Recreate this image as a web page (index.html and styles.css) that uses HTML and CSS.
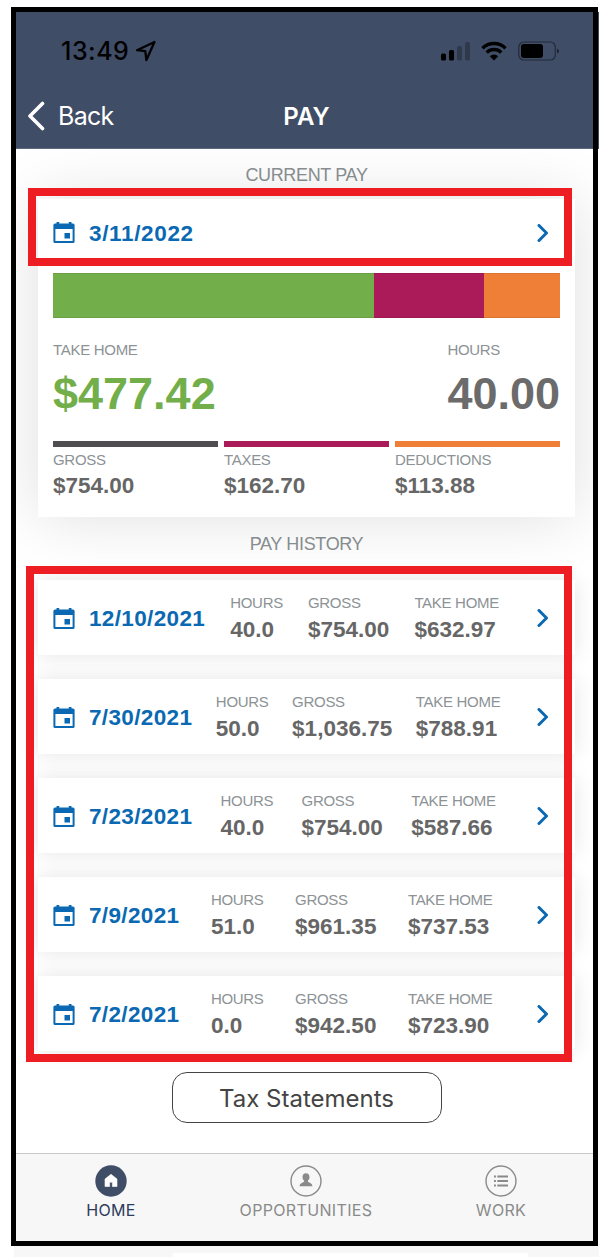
FILE: index.html
```html
<!DOCTYPE html>
<html lang="en">
<head>
    <meta charset="UTF-8">
    <meta name="viewport" content="width=device-width, initial-scale=1.0">
    <title>Pay</title>
    <link rel="stylesheet" href="styles.css">
</head>
<body>
    <!-- Shared icons -->
    <svg class="defs" width="0" height="0">
        <symbol id="calendar" viewBox="0 0 22 22">
            <path fill-rule="evenodd" d="M3.500 0h2.700v1.500h9.600V0h2.700v1.500H20a1.600 1.600 0 0 1 1.600 1.600V19.400a1.600 1.600 0 0 1-1.600 1.600H2A1.600 1.600 0 0 1 .4 19.400V3.100A1.600 1.600 0 0 1 2 1.500h1.500zM2.400 7v12h17.200V7zM11.500 11h5.500v5.500h-5.500z"/>
        </symbol>
        <symbol id="chevron" viewBox="0 0 12 18">
            <path d="M2 1.500 9.500 9 2 16.500" fill="none" stroke="currentColor" stroke-width="3" stroke-linecap="round" stroke-linejoin="round"/>
        </symbol>
    </svg>

    <div class="phone">
        <header class="header">
            <div class="status">
                <span class="time">13:49</span>
                <svg class="location" width="22" height="22" viewBox="0 0 22 22">
                    <path d="M19.500 2 2 10.200l8.300 1 1.100 8.800z" fill="none" stroke="#000" stroke-width="2.300" stroke-linejoin="round"/>
                </svg>
                <div class="status-icons">
                    <svg width="29" height="20" viewBox="0 0 29 20">
                        <rect x="0" y="12.500" width="5" height="7" rx="1.500"/>
                        <rect x="8" y="9" width="5" height="10.500" rx="1.500"/>
                        <rect x="16" y="5" width="5" height="14.500" rx="1.500" opacity=".25"/>
                        <rect x="24" y="1" width="5" height="18.500" rx="1.500" opacity=".25"/>
                    </svg>
                    <svg width="26" height="20" viewBox="0 0 26 20">
                        <path d="M1.500 7.200a16.500 16.500 0 0 1 23 0M5.700 11.500a10.500 10.500 0 0 1 14.600 0" fill="none" stroke="#000" stroke-width="3.400"/>
                        <path d="M13 19.500 8.800 15.300a6 6 0 0 1 8.400 0z"/>
                    </svg>
                    <svg width="42" height="20" viewBox="0 0 42 20">
                        <rect x=".8" y="1" width="36.500" height="18" rx="5" fill="none" stroke="#000" stroke-opacity=".45" stroke-width="1.200"/>
                        <rect x="3" y="3" width="22" height="14" rx="3"/>
                        <path d="M39 7.500q2 .8 2 2.500t-2 2.500z" opacity=".55"/>
                    </svg>
                </div>
            </div>
            <div class="nav">
                <a class="back">
                    <svg width="18" height="30" viewBox="0 0 18 30">
                        <path d="M15.500 2.500 3 15l12.500 12.500" fill="none" stroke="#fff" stroke-width="3.600" stroke-linecap="round" stroke-linejoin="round"/>
                    </svg>
                    <span>Back</span>
                </a>
                <h1 class="title">PAY</h1>
            </div>
        </header>

        <main class="content">
            <h2 class="section-title">CURRENT PAY</h2>
            <section class="card current">
                <div class="current-date">
                    <svg class="calendar"><use href="#calendar"/></svg>
                    <span class="date">3/11/2022</span>
                    <svg class="chevron"><use href="#chevron"/></svg>
                </div>
                <div class="bar">
                    <div class="bar-part green"></div>
                    <div class="bar-part red"></div>
                    <div class="bar-part orange"></div>
                </div>
                <div class="totals">
                    <div>
                        <div class="label">TAKE HOME</div>
                        <div class="big take-home">$477.42</div>
                    </div>
                    <div>
                        <div class="label">HOURS</div>
                        <div class="big">40.00</div>
                    </div>
                </div>
                <div class="breakdown">
                    <div class="item gross">
                        <div class="label">GROSS</div>
                        <div class="value">$754.00</div>
                    </div>
                    <div class="item taxes">
                        <div class="label">TAXES</div>
                        <div class="value">$162.70</div>
                    </div>
                    <div class="item deductions">
                        <div class="label">DEDUCTIONS</div>
                        <div class="value">$113.88</div>
                    </div>
                </div>
            </section>

            <h2 class="section-title history-title">PAY HISTORY</h2>
            <section class="history">
                <div class="card row">
                    <svg class="calendar"><use href="#calendar"/></svg>
                    <div class="row-data">
                        <span class="date">12/10/2021</span>
                        <div><div class="label">HOURS</div><div class="value">40.0</div></div>
                        <div><div class="label">GROSS</div><div class="value">$754.00</div></div>
                        <div><div class="label">TAKE HOME</div><div class="value">$632.97</div></div>
                        <svg class="chevron"><use href="#chevron"/></svg>
                    </div>
                </div>
                <div class="card row">
                    <svg class="calendar"><use href="#calendar"/></svg>
                    <div class="row-data">
                        <span class="date">7/30/2021</span>
                        <div><div class="label">HOURS</div><div class="value">50.0</div></div>
                        <div><div class="label">GROSS</div><div class="value">$1,036.75</div></div>
                        <div><div class="label">TAKE HOME</div><div class="value">$788.91</div></div>
                        <svg class="chevron"><use href="#chevron"/></svg>
                    </div>
                </div>
                <div class="card row">
                    <svg class="calendar"><use href="#calendar"/></svg>
                    <div class="row-data">
                        <span class="date">7/23/2021</span>
                        <div><div class="label">HOURS</div><div class="value">40.0</div></div>
                        <div><div class="label">GROSS</div><div class="value">$754.00</div></div>
                        <div><div class="label">TAKE HOME</div><div class="value">$587.66</div></div>
                        <svg class="chevron"><use href="#chevron"/></svg>
                    </div>
                </div>
                <div class="card row">
                    <svg class="calendar"><use href="#calendar"/></svg>
                    <div class="row-data">
                        <span class="date">7/9/2021</span>
                        <div><div class="label">HOURS</div><div class="value">51.0</div></div>
                        <div><div class="label">GROSS</div><div class="value">$961.35</div></div>
                        <div><div class="label">TAKE HOME</div><div class="value">$737.53</div></div>
                        <svg class="chevron"><use href="#chevron"/></svg>
                    </div>
                </div>
                <div class="card row">
                    <svg class="calendar"><use href="#calendar"/></svg>
                    <div class="row-data">
                        <span class="date">7/2/2021</span>
                        <div><div class="label">HOURS</div><div class="value">0.0</div></div>
                        <div><div class="label">GROSS</div><div class="value">$942.50</div></div>
                        <div><div class="label">TAKE HOME</div><div class="value">$723.90</div></div>
                        <svg class="chevron"><use href="#chevron"/></svg>
                    </div>
                </div>
            </section>

            <button class="tax-button">Tax Statements</button>
        </main>

        <nav class="tabs">
            <a class="tab active">
                <svg width="32" height="32" viewBox="0 0 32 32">
                    <circle cx="16" cy="16" r="15.700" fill="#404d66"/>
                    <path d="M16 9.300l6 4.700v7.500h-4.600v-4.300h-2.800v4.300H10V14z" fill="#fff" stroke="#fff" stroke-width=".6" stroke-linejoin="round"/>
                </svg>
                <span>HOME</span>
            </a>
            <a class="tab">
                <svg width="32" height="32" viewBox="0 0 32 32">
                    <circle cx="16" cy="16" r="15" fill="none" stroke="#8a8a8a" stroke-width="1.400"/>
                    <path d="M16 8.200c2.200 0 3.500 1.500 3.500 3.800 0 1.600-.7 3-1.600 3.800v.9c1.600.9 4.200 1.300 4.600 4.500H9.500c.4-3.200 3-3.600 4.600-4.500v-.9c-.9-.8-1.600-2.200-1.600-3.800 0-2.300 1.300-3.800 3.500-3.800z" fill="#8a8a8a"/>
                </svg>
                <span>OPPORTUNITIES</span>
            </a>
            <a class="tab">
                <svg width="32" height="32" viewBox="0 0 32 32">
                    <circle cx="16" cy="16" r="15" fill="none" stroke="#8a8a8a" stroke-width="1.400"/>
                    <path d="M9 11.500h1.900M9 16h1.900M9 20.500h1.900M12.300 11.500H23M12.300 16H23M12.300 20.500H23" stroke="#8a8a8a" stroke-width="2"/>
                </svg>
                <span>WORK</span>
            </a>
        </nav>
    </div>
    <div class="footer-strip"><div class="footer-gap"></div></div>

    <!-- Red callouts over the tappable areas -->
    <div class="callout callout-current"></div>
    <div class="callout callout-history"></div>
</body>
</html>
```
FILE: styles.css
```css
* {
    box-sizing: border-box;
}

body {
    margin: 0;
    padding-top: 7px;
    width: 609px;
    height: 1257px;
    position: relative;
    overflow: hidden;
    background-color: #fff;
    font-family: "Liberation Sans", Arial, sans-serif;
}

.defs {
    position: absolute;
}

.phone {
    width: 587px;
    height: 1239px;
    margin-left: 11px;
    border: 5px solid #000;
    display: flex;
    flex-direction: column;
}

/* Header */
.header {
    position: relative;
    height: 137px;
    flex: none;
    background-color: #404d66;
    border-bottom: 1px solid #5d6880;
    font-family: Inter, sans-serif;
}

/* sliver of the header outside the black frame */
.header::after {
    content: "";
    position: absolute;
    top: 0;
    right: -6px;
    width: 1px;
    height: 137px;
    background-color: #404d66;
}

.status {
    display: flex;
    align-items: center;
    height: 78px;
    padding: 0 33px 0 45px;
}

.time {
    font-size: 25px;
    font-weight: 500;
    letter-spacing: 0.5px;
    color: #000;
    width: 69px;
    white-space: nowrap;
}

.location {
    margin-left: 5px;
}

.status-icons {
    display: flex;
    gap: 11px;
    margin-left: auto;
}

.nav {
    display: grid;
    grid-template-columns: 1fr auto 1fr;
    align-items: center;
    height: 50px;
    padding: 1px 7px 0 11px;
    color: #fff;
}

.back {
    display: flex;
    align-items: center;
    gap: 13px;
    font-size: 25px;
    letter-spacing: -0.7px;
}

.title {
    margin: 0;
    padding-top: 1px;
    font-size: 24px;
    font-weight: 600;
}

/* Content */
.content {
    height: 1004px;
    flex: none;
    padding: 0 18px 0 22px;
    overflow: hidden;
}

.section-title {
    margin: 0;
    height: 50px;
    line-height: 52px;
    text-align: center;
    font-size: 18px;
    font-weight: normal;
    letter-spacing: -0.35px;
    color: #8a9093;
}

.card {
    background-color: #fff;
}

.current {
    position: relative;
    height: 318px;
    padding: 0 15px;
    box-shadow: 0 0 60px rgba(0, 0, 0, 0.13);
}

.current-date {
    display: flex;
    align-items: center;
    height: 74px;
    padding-bottom: 6px;
}

.calendar {
    width: 22px;
    height: 22px;
    flex: none;
    fill: #0a69b2;
}

.date {
    padding-top: 1px;
    color: #0a69b2;
    font-size: 22.5px;
    font-weight: bold;
    letter-spacing: 0.35px;
    white-space: nowrap;
}

.current-date .date {
    margin-left: 14px;
    letter-spacing: 0.65px;
}

.chevron {
    width: 12px;
    height: 18px;
    flex: none;
    color: #0a69b2;
}

.current-date .chevron {
    margin-left: auto;
    margin-right: 11px;
}

.bar {
    display: flex;
    height: 45px;
}

.bar-part {
    border: 1px solid rgba(0, 0, 0, 0.08);
    border-left-width: 0;
    border-right-width: 0;
}

.green {
    width: 321px;
    background-color: #72ae4a;
}

.red {
    width: 110px;
    background-color: #ac1b59;
}

.orange {
    width: 76px;
    background-color: #ef7e36;
}

.label {
    font-size: 15px;
    line-height: 20px;
    letter-spacing: -0.3px;
    color: #8c9295;
    white-space: nowrap;
}

.value {
    padding-top: 1px;
    font-size: 22.5px;
    line-height: 30px;
    font-weight: bold;
    color: #666;
    white-space: nowrap;
}

.totals {
    display: flex;
    justify-content: space-between;
    padding-top: 22px;
    height: 123px;
}

.big {
    font-size: 45px;
    line-height: 67px;
    font-weight: bold;
    color: #6b6b6b;
}

.take-home {
    color: #72ae4a;
}

.breakdown {
    display: grid;
    grid-template-columns: repeat(3, 1fr);
    gap: 6px;
}

.item {
    border-top: 6px solid #4f4d50;
    padding-top: 3px;
}

.taxes {
    border-color: #ac1b59;
}

.deductions {
    border-color: #ef7e36;
}

/* Pay history */
.history-title {
    height: 63px;
    line-height: 54px;
}

.history {
    display: flex;
    flex-direction: column;
    gap: 24px;
}

.row {
    position: relative;
    display: flex;
    align-items: center;
    height: 75px;
    padding: 2px 26px 0 15px;
    box-shadow: 0 0 20px rgba(0, 0, 0, 0.11);
}

.row-data {
    display: flex;
    flex: 1;
    align-items: center;
    justify-content: space-between;
    margin-left: 14px;
}

.row .value {
    padding-top: 2px;
}

.row .chevron {
    margin-top: -2px;
    margin-left: -12px;
    box-sizing: content-box;
    padding-left: 25px;
}

.tax-button {
    display: block;
    width: 270px;
    height: 51px;
    margin: 21px auto 0;
    padding-top: 3px;
    background-color: #fff;
    border: 1.5px solid #444;
    border-radius: 15px;
    font-family: Inter, sans-serif;
    font-size: 24px;
    color: #444;
}

/* Bottom tabs */
.tabs {
    flex: 1;
    display: grid;
    grid-template-columns: 190px 200px 190px;
    background-color: #f7f7f7;
    border-top: 1px solid #c8c8c8;
}

.tab {
    display: flex;
    flex-direction: column;
    align-items: center;
    padding-top: 11px;
    font-family: Inter, sans-serif;
    font-size: 16px;
    line-height: 20px;
    letter-spacing: 0.35px;
    color: #8a8a8a;
}

.tab span {
    margin-top: 3px;
}

.active {
    color: #2d3c5c;
}

.footer-strip {
    width: 585px;
    height: 11px;
    margin-left: 14px;
    padding: 7px 0 0 159px;
    background-color: #f7f7f7;
}

.footer-gap {
    width: 355px;
    height: 4px;
    background-color: #fff;
}

/* Callouts */
.callout {
    position: absolute;
    border: 8px solid #ee1c23;
}

.callout-current {
    left: 28px;
    top: 188px;
    width: 544px;
    height: 78px;
}

.callout-history {
    left: 26px;
    top: 566px;
    width: 546px;
    height: 496px;
}
```
